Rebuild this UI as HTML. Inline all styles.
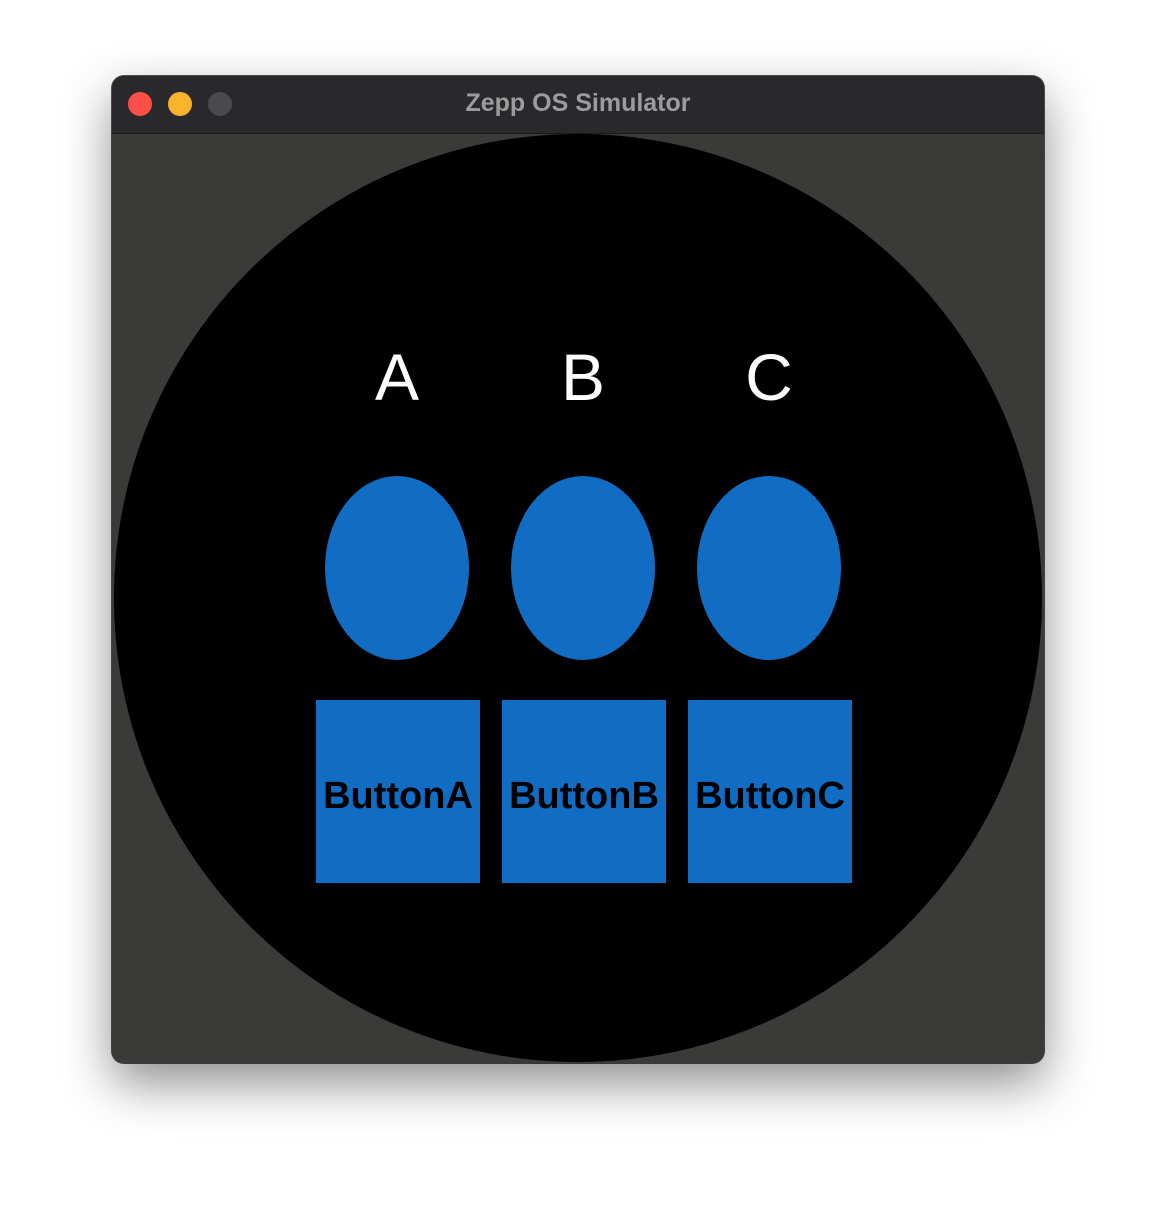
<!DOCTYPE html>
<html><head><style>
html,body{margin:0;padding:0;width:1156px;height:1212px;background:#fff;overflow:hidden;font-family:"Liberation Sans",sans-serif}
.win{position:absolute;left:112px;top:76px;width:932px;height:987px;border-radius:12px;background:#3a3a38;overflow:hidden;box-shadow:0 20px 50px rgba(0,0,0,.45),0 0 0 1px #555}
.bar{position:absolute;left:0;top:0;width:100%;height:57px;background:#29292b;border-bottom:1px solid #1a1a1a}
.dot{position:absolute;top:16px;width:24px;height:24px;border-radius:50%}
.title{position:absolute;left:0;right:0;top:13px;text-align:center;color:#9c9c9e;font-weight:bold;font-size:25px}
.circle{position:absolute;left:2px;top:58px;width:928px;height:928px;border-radius:50%;background:#000}
.l{position:absolute;color:#fff;font-size:66px;width:100px;text-align:center;top:263px}
.e{position:absolute;width:144px;height:184px;border-radius:50%;background:#116dc4;top:400px}
.b{position:absolute;width:164px;height:183px;background:#116dc4;top:624px;color:#000;font-weight:bold;font-size:38px;line-height:192px;text-align:center;overflow:hidden}
</style></head><body>
<div class="win">
<div class="bar">
<div class="dot" style="left:16px;background:#fe4e47"></div>
<div class="dot" style="left:56px;background:#fbb22d"></div>
<div class="dot" style="left:96px;background:#4a4a4c"></div>
<div class="title">Zepp OS Simulator</div>
</div>
<div class="circle"></div>
<div class="l" style="left:235px">A</div>
<div class="l" style="left:421px">B</div>
<div class="l" style="left:607px">C</div>
<div class="e" style="left:213px"></div>
<div class="e" style="left:399px"></div>
<div class="e" style="left:585px"></div>
<div class="b" style="left:204px">ButtonA</div>
<div class="b" style="left:390px">ButtonB</div>
<div class="b" style="left:576px">ButtonC</div>
</div>
</body></html>
